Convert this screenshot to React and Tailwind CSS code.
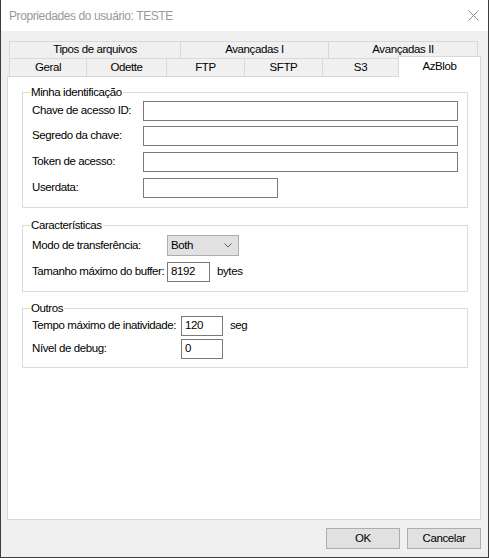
import React from "react";

const ff = "font-['Liberation_Sans',Arial,sans-serif]";
const txt = "text-[11.5px] tracking-[-0.4px]";

function Tab({ label, w, last }) {
  return (
    <div
      className={`${w} h-[17px] border-t border-l ${last ? "border-r" : ""} border-[#d9d9d9] bg-[#f0f0f0] flex items-center justify-center ${txt} leading-none text-black whitespace-nowrap`}
    >
      {label}
    </div>
  );
}

function LowerTab({ label, w }) {
  return (
    <div
      className={`${w} h-[18px] border-t border-l border-[#d9d9d9] bg-[#f0f0f0] flex items-center justify-center ${txt} leading-none text-black whitespace-nowrap`}
    >
      {label}
    </div>
  );
}

function Group({ title, children, className = "" }) {
  return (
    <fieldset className={`border border-[#dcdcdc] pl-[9px] pr-[9px] ${className}`}>
      <legend className={`-ml-[2px] px-[1px] ${txt} leading-[14px] text-black`}>{title}</legend>
      {children}
    </fieldset>
  );
}

function Label({ w = "", children }) {
  return <span className={`${w} shrink-0 whitespace-nowrap ${txt} text-black`}>{children}</span>;
}

function TextBox({ w, value = "" }) {
  return (
    <div className={`${w} shrink-0 h-[20px] border border-[#7a7a7a] bg-white flex items-center pl-[3px] ${txt} text-black`}>
      {value}
    </div>
  );
}

export default function App() {
  return (
    <div className={`${ff} w-[489px] h-[558px] flex flex-col bg-[#f0f0f0] border-l border-r border-b border-[#3c3c3c]`}>
      {/* title bar */}
      <div className="h-[31px] bg-white flex items-center justify-between pl-[8px] pr-[9px]">
        <span className="text-[12px] tracking-[-0.4px] text-[#999999]">Propriedades do usuário: TESTE</span>
        <svg width="11" height="11" viewBox="0 0 11 11">
          <path d="M0.5 0.5 L10.5 10.5 M10.5 0.5 L0.5 10.5" stroke="#8c8c8c" strokeWidth="1" />
        </svg>
      </div>

      <div className="flex-1 flex flex-col pt-[10px] pl-[6px] pr-[7px] pb-[8px]">
        {/* tab headers */}
        <div className="pl-[2px] flex flex-col">
          <div className="flex">
            <Tab label="Tipos de arquivos" w="w-[171px]" />
            <Tab label="Avançadas I" w="w-[148px]" />
            <Tab label="Avançadas II" w="w-[150px]" last />
          </div>
          <div className="flex items-end h-[18px]">
            <LowerTab label="Geral" w="w-[77px]" />
            <LowerTab label="Odette" w="w-[80px]" />
            <LowerTab label="FTP" w="w-[78px]" />
            <LowerTab label="SFTP" w="w-[78px]" />
            <LowerTab label="S3" w="w-[76px]" />
            <div className={`relative z-10 w-[83px] h-[21px] -mt-[2px] -mb-px border-t border-l border-r border-[#d9d9d9] bg-white flex justify-center pt-[3px] ${txt} leading-[12px] text-black`}>
              AzBlob
            </div>
          </div>
        </div>

        {/* tab page */}
        <div className="flex-1 bg-white border border-[#d9d9d9] pt-[8px] pl-[14px] pr-[12px] flex flex-col">
          <Group title="Minha identificação" className="pb-[9px]">
            <div className="flex flex-col mt-[2px]">
              <div className="flex items-center justify-between h-[20px]">
                <Label>Chave de acesso ID:</Label>
                <TextBox w="w-[315px]" />
              </div>
              <div className="flex items-center justify-between h-[20px] mt-[5px]">
                <Label>Segredo da chave:</Label>
                <TextBox w="w-[315px]" />
              </div>
              <div className="flex items-center justify-between h-[20px] mt-[6px]">
                <Label>Token de acesso:</Label>
                <TextBox w="w-[315px]" />
              </div>
              <div className="flex items-center h-[20px] mt-[6px]">
                <Label w="w-[111px]">Userdata:</Label>
                <TextBox w="w-[135px]" />
              </div>
            </div>
          </Group>

          <Group title="Características" className="mt-[10px] pb-[9px]">
            <div className="flex flex-col mt-[3px]">
              <div className="flex items-center h-[21px]">
                <Label w="w-[135px]">Modo de transferência:</Label>
                <div className={`w-[72px] h-[21px] shrink-0 border border-[#adadad] bg-[#e1e1e1] flex items-center justify-between pl-[3px] pr-[6px] ${txt}`}>
                  <span>Both</span>
                  <svg width="8" height="5" viewBox="0 0 8 5">
                    <path d="M0.5 0.5 L4 4 L7.5 0.5" fill="none" stroke="#5a5a5a" strokeWidth="1" />
                  </svg>
                </div>
              </div>
              <div className="flex items-center h-[20px] mt-[6px]">
                <Label w="w-[135px]">Tamanho máximo do buffer:</Label>
                <TextBox w="w-[43px]" value="8192" />
                <span className={`${txt} ml-[7px]`}>bytes</span>
              </div>
            </div>
          </Group>

          <Group title="Outros" className="mt-[9px] pb-[8px]">
            <div className="flex flex-col mt-[1px]">
              <div className="flex items-center h-[20px]">
                <Label w="w-[149px]">Tempo máximo de inatividade:</Label>
                <TextBox w="w-[42px]" value="120" />
                <span className={`${txt} ml-[7px]`}>seg</span>
              </div>
              <div className="flex items-center h-[20px] mt-[3px]">
                <Label w="w-[149px]">Nível de debug:</Label>
                <TextBox w="w-[42px]" value="0" />
              </div>
            </div>
          </Group>
        </div>

        {/* dialog buttons */}
        <div className="flex justify-end gap-[7px] mt-[8px]">
          <button className={`w-[74px] h-[21px] border border-[#adadad] bg-[#e1e1e1] ${txt} text-black`}>OK</button>
          <button className={`w-[74px] h-[21px] border border-[#adadad] bg-[#e1e1e1] ${txt} text-black`}>Cancelar</button>
        </div>
      </div>
    </div>
  );
}
